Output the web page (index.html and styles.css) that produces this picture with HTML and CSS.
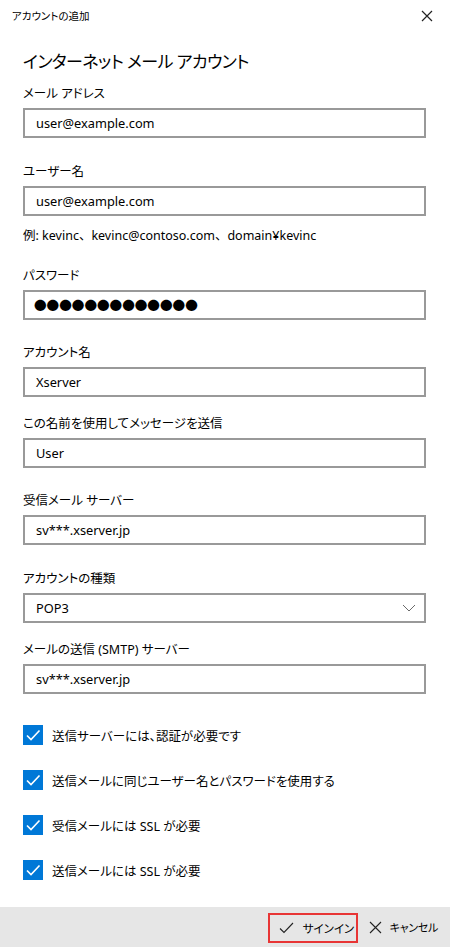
FILE: index.html
```html
<!DOCTYPE html>
<html lang="ja">
<head>
<meta charset="utf-8">
<title>アカウントの追加</title>
<link rel="stylesheet" href="styles.css">
</head>
<body>
<div class="window">
  <div class="titlebar">
    <span class="title">アカウントの追加</span>
    <svg class="close" width="12" height="12" viewBox="0 0 12 12"><path d="M1 1 L11 11 M11 1 L1 11" stroke="#222" stroke-width="1.2" fill="none"/></svg>
  </div>
  <div class="content">
    <h1 class="heading">インターネット メール アカウント</h1>

    <div class="field f1">
      <div class="label">メール アドレス</div>
      <div class="input">user@example.com</div>
    </div>

    <div class="field f2">
      <div class="label">ユーザー名</div>
      <div class="input">user@example.com</div>
    </div>
    <div class="hint">例: kevinc、kevinc@contoso.com、domain¥kevinc</div>

    <div class="field f3">
      <div class="label">パスワード</div>
      <div class="input password">●●●●●●●●●●●●●</div>
    </div>

    <div class="field f4">
      <div class="label">アカウント名</div>
      <div class="input">Xserver</div>
    </div>

    <div class="field f5">
      <div class="label">この名前を使用してメッセージを送信</div>
      <div class="input">User</div>
    </div>

    <div class="field f4">
      <div class="label">受信メール サーバー</div>
      <div class="input">sv***.xserver.jp</div>
    </div>

    <div class="field f6">
      <div class="label">アカウントの種類</div>
      <div class="input select">
        <span>POP3</span>
        <svg width="14" height="8" viewBox="0 0 14 8"><path d="M1 1 L7 7 L13 1" stroke="#6a6a6a" stroke-width="1" fill="none"/></svg>
      </div>
    </div>

    <div class="field f5">
      <div class="label">メールの送信 (SMTP) サーバー</div>
      <div class="input">sv***.xserver.jp</div>
    </div>

    <div class="checks">
      <div class="check"><span class="box"><svg width="20" height="20" viewBox="0 0 20 20"><path d="M4 10.5 L8 14.5 L16.5 5.5" stroke="#fff" stroke-width="1.6" fill="none"/></svg></span><span>送信サーバーには、認証が必要です</span></div>
      <div class="check"><span class="box"><svg width="20" height="20" viewBox="0 0 20 20"><path d="M4 10.5 L8 14.5 L16.5 5.5" stroke="#fff" stroke-width="1.6" fill="none"/></svg></span><span>送信メールに同じユーザー名とパスワードを使用する</span></div>
      <div class="check"><span class="box"><svg width="20" height="20" viewBox="0 0 20 20"><path d="M4 10.5 L8 14.5 L16.5 5.5" stroke="#fff" stroke-width="1.6" fill="none"/></svg></span><span>受信メールには SSL が必要</span></div>
      <div class="check"><span class="box"><svg width="20" height="20" viewBox="0 0 20 20"><path d="M4 10.5 L8 14.5 L16.5 5.5" stroke="#fff" stroke-width="1.6" fill="none"/></svg></span><span>送信メールには SSL が必要</span></div>
    </div>
  </div>
  <div class="footer">
    <div class="btn signin">
      <svg width="15" height="12" viewBox="0 0 15 12"><path d="M1 6.5 L5 10.5 L14 1" stroke="#222" stroke-width="1.1" fill="none"/></svg>
      <span>サインイン</span>
    </div>
    <div class="btn cancel">
      <svg width="13" height="13" viewBox="0 0 13 13"><path d="M1 1 L12 12 M12 1 L1 12" stroke="#222" stroke-width="1.1" fill="none"/></svg>
      <span>キャンセル</span>
    </div>
  </div>
</div>
</body>
</html>
```

FILE: styles.css
```css
* { box-sizing: border-box; }
html, body { margin: 0; padding: 0; background: #fff; }
body {
  font-family: "Noto Sans", "Noto Sans CJK JP", sans-serif;
  font-feature-settings: "palt";
  color: #000;
}
.window {
  width: 450px;
  height: 947px;
  display: flex;
  flex-direction: column;
  overflow: hidden;
}
.titlebar {
  height: 35px;
  flex: none;
  display: flex;
  align-items: center;
  justify-content: space-between;
  padding: 0 17px 3px 12px;
}
.title { font-size: 10.5px; line-height: 14px; }
.content {
  flex: 1;
  padding: 0 24px 0 23px;
}
.heading {
  margin: 14px 0 0 0;
  font-size: 17px;
  letter-spacing: -0.6px;
  font-weight: normal;
  line-height: 26px;
  height: 26px;
}
.field { display: flex; flex-direction: column; gap: 4px; }
.f1 { margin-top: 9px; }
.f2 { margin-top: 24px; }
.f3 { margin-top: 20px; }
.f4 { margin-top: 23px; }
.f5 { margin-top: 17px; }
.f6 { margin-top: 24px; }
.label { font-size: 12.5px; line-height: 20px; height: 20px; }
.input {
  height: 30px;
  border: 2px solid #999;
  padding: 0 10px 0 11px;
  font-size: 12.8px;
  line-height: 26px;
  display: flex;
  align-items: center;
}
.password { font-family: "Noto Sans CJK JP", sans-serif; font-size: 12.6px; font-feature-settings: normal; padding-left: 9px; }
.select { justify-content: space-between; padding-right: 8px; }
.hint {
  margin-top: 10px;
  font-size: 12.5px;
  line-height: 20px;
  height: 20px;
  font-feature-settings: normal;
}
.checks {
  margin-top: 31px;
  display: flex;
  flex-direction: column;
  gap: 25px;
}
.check {
  display: flex;
  align-items: center;
  gap: 9px;
  height: 20px;
  font-size: 12.5px;
}
.box {
  width: 20px;
  height: 20px;
  background: #0078d7;
  display: flex;
  flex: none;
}
.footer {
  flex: none;
  height: 40px;
  background: #e6e6e6;
  display: flex;
  justify-content: flex-end;
  align-items: center;
  gap: 11px;
  padding: 0 12px 0 0;
}
.btn {
  display: flex;
  align-items: center;
  font-size: 11.5px;
  height: 30px;
  gap: 9px;
  white-space: nowrap;
  flex: none;
}
.signin {
  border: 2px solid #e83535;
  width: 90px;
  padding-left: 9px;
  margin-top: 2px;
}
.cancel { gap: 8px; font-size: 11px; letter-spacing: -0.3px; }
```
